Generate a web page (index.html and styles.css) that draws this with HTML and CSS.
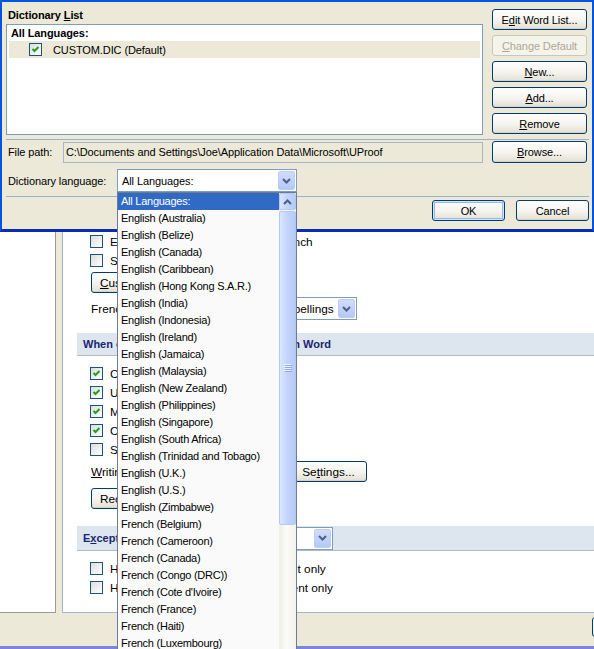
FILE: index.html
```html
<!DOCTYPE html>
<html lang="en">
<head>
    <meta charset="UTF-8">
    <title>Custom Dictionaries</title>
    <link rel="stylesheet" href="styles.css">
</head>
<body>
    <!-- Word Options window behind the dialog -->
    <div class="options">
        <div class="options-main">
            <div class="nav"></div>
            <div class="gutter"></div>
            <div class="panel">
                <div class="group">
                    <div class="check-row"><span class="cb"></span>Enforce accented uppercase in French</div>
                    <div class="check-row"><span class="cb"></span>Suggest from main dictionary only</div>
                    <button class="btn custom-btn"><u>C</u>ustom Dictionaries...</button>
                    <div class="field-row french-row">
                        <span class="field-label french-label">French modes:</span>
                        <div class="combo french-combo">
                            <span class="combo-text">Traditional and new spellings</span>
                            <span class="combo-arrow"><svg width="9" height="6" viewBox="0 0 9 6"><polyline points="1,1 4.5,4.5 8,1" fill="none" stroke="#4D6185" stroke-width="2"/></svg></span>
                        </div>
                    </div>
                </div>

                <div class="band">When correcting spelling and grammar in Word</div>

                <div class="group checks">
                    <div class="check-row"><span class="cb checked"><svg width="9" height="9" viewBox="0 0 9 9"><polyline points="1.5,4 3.5,6 7.5,2" fill="none" stroke="#21A121" stroke-width="2"/></svg></span>Check spelling as you type</div>
                    <div class="check-row"><span class="cb checked"><svg width="9" height="9" viewBox="0 0 9 9"><polyline points="1.5,4 3.5,6 7.5,2" fill="none" stroke="#21A121" stroke-width="2"/></svg></span>Use contextual spelling</div>
                    <div class="check-row"><span class="cb checked"><svg width="9" height="9" viewBox="0 0 9 9"><polyline points="1.5,4 3.5,6 7.5,2" fill="none" stroke="#21A121" stroke-width="2"/></svg></span>Mark grammar errors as you type</div>
                    <div class="check-row"><span class="cb checked"><svg width="9" height="9" viewBox="0 0 9 9"><polyline points="1.5,4 3.5,6 7.5,2" fill="none" stroke="#21A121" stroke-width="2"/></svg></span>Check grammar with spelling</div>
                    <div class="check-row"><span class="cb"></span>Show readability statistics</div>
                    <div class="field-row writing-row">
                        <span class="field-label writing-label"><u>W</u>riting Style:</span>
                        <div class="combo writing-combo">
                            <span class="combo-text">Grammar Only</span>
                            <span class="combo-arrow"><svg width="9" height="6" viewBox="0 0 9 6"><polyline points="1,1 4.5,4.5 8,1" fill="none" stroke="#4D6185" stroke-width="2"/></svg></span>
                        </div>
                        <button class="btn settings-btn">Se<u>t</u>tings...</button>
                    </div>
                    <button class="btn recheck-btn">Recheck Document</button>
                </div>

                <div class="band band-tall">
                    <span class="band-label">E<u>x</u>ceptions for:</span>
                    <div class="combo except-combo">
                        <span class="combo-text">Document1</span>
                        <span class="combo-arrow"><svg width="9" height="6" viewBox="0 0 9 6"><polyline points="1,1 4.5,4.5 8,1" fill="none" stroke="#4D6185" stroke-width="2"/></svg></span>
                    </div>
                </div>

                <div class="group checks">
                    <div class="check-row"><span class="cb"></span>Hide spelling errors in this document only</div>
                    <div class="check-row"><span class="cb"></span>Hide grammar errors in this document only</div>
                </div>
            </div>
        </div>
        <div class="options-footer">
            <button class="btn footer-btn" aria-label="OK"></button>
        </div>
        <div class="options-edge"></div>
    </div>

    <!-- Custom Dictionaries dialog -->
    <div class="dialog">
        <div class="dialog-top">
            <div class="dict-col">
                <div class="dict-label">Dictionary <u>L</u>ist</div>
                <div class="dict-list">
                    <div class="dict-group">All Languages:</div>
                    <div class="dict-row">
                        <span class="cb checked"><svg width="9" height="9" viewBox="0 0 9 9"><polyline points="1.5,4 3.5,6 7.5,2" fill="none" stroke="#21A121" stroke-width="2"/></svg></span>
                        CUSTOM.DIC (Default)
                    </div>
                </div>
            </div>
            <div class="dict-buttons">
                <button class="btn">E<u>d</u>it Word List...</button>
                <button class="btn disabled"><u>C</u>hange Default</button>
                <button class="btn"><u>N</u>ew...</button>
                <button class="btn"><u>A</u>dd...</button>
                <button class="btn"><u>R</u>emove</button>
            </div>
        </div>

        <div class="sep"></div>

        <div class="path-row">
            <span class="path-label">File path:</span>
            <div class="path-box">C:\Documents and Settings\Joe\Application Data\Microsoft\UProof</div>
            <button class="btn browse-btn"><u>B</u>rowse...</button>
        </div>

        <div class="lang-row">
            <span class="lang-label">Dictionary language:</span>
            <div class="combo lang-combo">
                <span class="combo-text">All Languages:</span>
                <span class="combo-arrow"><svg width="9" height="6" viewBox="0 0 9 6"><polyline points="1,1 4.5,4.5 8,1" fill="none" stroke="#4D6185" stroke-width="2"/></svg></span>
            </div>
        </div>

        <div class="sep sep-bottom"></div>

        <div class="dialog-actions">
            <button class="btn default-btn">OK</button>
            <button class="btn">Cancel</button>
        </div>
    </div>

    <!-- open language dropdown -->
    <div class="droplist">
        <ul class="droplist-items">
            <li class="selected">All Languages:</li>
            <li>English (Australia)</li>
            <li>English (Belize)</li>
            <li>English (Canada)</li>
            <li>English (Caribbean)</li>
            <li>English (Hong Kong S.A.R.)</li>
            <li>English (India)</li>
            <li>English (Indonesia)</li>
            <li>English (Ireland)</li>
            <li>English (Jamaica)</li>
            <li>English (Malaysia)</li>
            <li>English (New Zealand)</li>
            <li>English (Philippines)</li>
            <li>English (Singapore)</li>
            <li>English (South Africa)</li>
            <li>English (Trinidad and Tobago)</li>
            <li>English (U.K.)</li>
            <li>English (U.S.)</li>
            <li>English (Zimbabwe)</li>
            <li>French (Belgium)</li>
            <li>French (Cameroon)</li>
            <li>French (Canada)</li>
            <li>French (Congo (DRC))</li>
            <li>French (Cote d'Ivoire)</li>
            <li>French (France)</li>
            <li>French (Haiti)</li>
            <li>French (Luxembourg)</li>
        </ul>
        <div class="scrollbar">
            <div class="sb-btn"><svg width="9" height="6" viewBox="0 0 9 6"><polyline points="1,5 4.5,1.5 8,5" fill="none" stroke="#4D6185" stroke-width="2"/></svg></div>
            <div class="sb-thumb">
                <svg width="8" height="8" viewBox="0 0 8 8">
                    <rect x="0" y="0" width="7" height="1" fill="#EEF4FE"/>
                    <rect x="1" y="1" width="7" height="1" fill="#8CA8E6"/>
                    <rect x="0" y="2" width="7" height="1" fill="#EEF4FE"/>
                    <rect x="1" y="3" width="7" height="1" fill="#8CA8E6"/>
                    <rect x="0" y="4" width="7" height="1" fill="#EEF4FE"/>
                    <rect x="1" y="5" width="7" height="1" fill="#8CA8E6"/>
                    <rect x="0" y="6" width="7" height="1" fill="#EEF4FE"/>
                    <rect x="1" y="7" width="7" height="1" fill="#8CA8E6"/>
                </svg>
            </div>
        </div>
    </div>
</body>
</html>
```

FILE: styles.css
```css
* {
    margin: 0;
    padding: 0;
    box-sizing: border-box;
}

body {
    position: relative;
    width: 594px;
    height: 649px;
    overflow: hidden;
    background: #ECE9D8;
    font-family: "Liberation Sans", Arial, sans-serif;
    font-size: 11px;
    letter-spacing: -0.1px;
    color: #000;
}

u {
    text-decoration: underline;
    text-underline-offset: 1px;
}

ul {
    list-style: none;
}

/* ---------- shared XP controls ---------- */

.btn {
    display: flex;
    align-items: center;
    justify-content: center;
    height: 21px;
    padding: 0 8px;
    font: inherit;
    letter-spacing: inherit;
    color: #000;
    white-space: nowrap;
    border: 1px solid #003C74;
    border-radius: 3px;
    background: linear-gradient(#FFFFFF, #F4F3EE 55%, #E3E0D2);
    box-shadow: inset 0 -1px 0 #D8D2C6;
}

.btn.disabled {
    color: #ACA899;
    border-color: #C9C7BA;
    background: #F5F4EA;
    box-shadow: none;
}

.default-btn {
    box-shadow: inset 0 0 0 1px #CEE7FF, inset 0 0 0 2px #98B8EA;
}

.cb {
    display: flex;
    align-items: center;
    justify-content: center;
    flex-shrink: 0;
    width: 13px;
    height: 13px;
    border: 1px solid #1C5180;
    background: linear-gradient(135deg, #DCDCD7, #FFFFFF);
}

.combo {
    display: flex;
    align-items: center;
    height: 23px;
    padding: 1px;
    border: 1px solid #7F9DB9;
    background: #fff;
}

.combo-text {
    flex: 1;
    padding-left: 3px;
    white-space: nowrap;
    overflow: hidden;
}

.combo-arrow {
    display: flex;
    align-items: center;
    justify-content: center;
    flex-shrink: 0;
    width: 17px;
    height: 19px;
    border: 1px solid #BCCEF6;
    border-radius: 2px;
    background: linear-gradient(#CFDCFC, #B5C9F7);
}

/* ---------- Word Options window ---------- */

.options {
    display: flex;
    flex-direction: column;
    height: 649px;
}

.options-main {
    display: flex;
    height: 613px;
}

.nav {
    width: 56px;
    background: #fff;
    border-right: 1px solid #9C9C9C;
    border-bottom: 1px solid #9C9C9C;
}

.gutter {
    width: 6px;
}

.panel {
    flex: 1;
    overflow: hidden;
    padding: 232px 0 0 14px;
    background: #fff;
    border-left: 1px solid #A3B6CC;
    border-bottom: 1px solid #A3B6CC;
    font-size: 11.8px;
    letter-spacing: 0;
}

.group {
    padding-left: 13px;
}

.checks {
    margin-top: 8px;
}

.check-row {
    display: flex;
    align-items: center;
    height: 19px;
    white-space: nowrap;
}

.check-row .cb {
    margin-right: 7px;
}

.custom-btn {
    width: 150px;
    margin: 2px 0 0 1px;
    justify-content: flex-start;
}

.field-row {
    display: flex;
    align-items: center;
    margin-left: 1px;
    white-space: nowrap;
}

.french-row {
    margin-top: 4px;
    height: 23px;
}

.french-label {
    width: 86px;
}

.french-combo {
    width: 180px;
}

.band {
    display: flex;
    align-items: center;
    height: 23px;
    margin-top: 13px;
    padding-left: 6px;
    background: #DDE6EE;
    border-bottom: 1px solid #B5BBC3;
    font-size: 11px;
    font-weight: bold;
    color: #1B2473;
    white-space: nowrap;
}

.band-tall {
    height: 25px;
    margin-top: 17px;
}

.band-label {
    width: 107px;
}

.except-combo {
    width: 143px;
    font-weight: normal;
    color: #000;
}

.writing-row {
    margin-top: 2px;
    height: 21px;
}

.writing-label {
    width: 74px;
}

.writing-combo {
    width: 118px;
    height: 21px;
}

.writing-combo .combo-arrow {
    height: 17px;
}

.settings-btn {
    width: 77px;
    margin-left: 7px;
}

.recheck-btn {
    width: 130px;
    margin: 6px 0 0 1px;
    justify-content: flex-start;
}

.options-footer {
    display: flex;
    justify-content: flex-end;
    align-items: flex-start;
    height: 33px;
    padding-top: 4px;
}

.footer-btn {
    width: 75px;
    height: 20px;
    margin-right: -73px;
}

.options-edge {
    height: 3px;
    background: #7A86D9;
}

/* ---------- Custom Dictionaries dialog ---------- */

.dialog {
    position: absolute;
    top: 0;
    left: 0;
    width: 594px;
    height: 232px;
    background: #ECE9D8;
    border: 2px solid #0055E5;
    border-bottom: 3px solid #0A2BB4;
}

.dialog-top {
    display: flex;
    padding: 0 5px 0 4px;
}

.dict-col {
    width: 477px;
}

.dict-label {
    height: 22px;
    padding: 4px 0 0 2px;
    line-height: 18px;
    font-weight: bold;
}

.dict-list {
    height: 111px;
    padding: 0 1px;
    border: 1px solid #7F9DB9;
    background: #fff;
}

.dict-group {
    height: 16px;
    line-height: 16px;
    padding-left: 3px;
    font-weight: bold;
}

.dict-row {
    display: flex;
    align-items: center;
    height: 17px;
    margin: 0 1px;
    padding-left: 20px;
    background: #ECE9D8;
}

.dict-row .cb {
    margin-right: 11px;
}

.dict-buttons {
    display: flex;
    flex-direction: column;
    gap: 5px;
    width: 95px;
    margin-left: 9px;
    padding-top: 7px;
}

.sep {
    height: 1px;
    margin: 4px 3px 0 4px;
    background: #9DB0CA;
}

.path-row {
    display: flex;
    align-items: center;
    height: 22px;
    margin-top: 1px;
    padding-left: 6px;
}

.path-label {
    width: 55px;
}

.path-box {
    width: 420px;
    height: 21px;
    padding-left: 2px;
    line-height: 19px;
    border: 1px solid #A5B6CC;
    white-space: nowrap;
}

.browse-btn {
    width: 95px;
    height: 22px;
    margin-left: 9px;
}

.lang-row {
    display: flex;
    align-items: center;
    height: 23px;
    margin-top: 6px;
    padding-left: 6px;
}

.lang-label {
    width: 109px;
}

.lang-combo {
    width: 180px;
}

.dialog-actions {
    display: flex;
    justify-content: flex-end;
    gap: 11px;
    margin-top: 3px;
    padding-right: 3px;
}

.dialog-actions .btn {
    width: 73px;
}

/* ---------- dropdown list ---------- */

.droplist {
    position: absolute;
    top: 192px;
    left: 117px;
    display: flex;
    width: 180px;
    height: 480px;
    border: 1px solid #6E7C93;
    background: #FAFAFA;
    letter-spacing: -0.25px;
}

.droplist-items {
    flex: 1;
}

.droplist-items li {
    height: 17px;
    line-height: 17px;
    padding-left: 3px;
    white-space: nowrap;
}

.droplist-items li.selected {
    background: #316AC5;
    color: #fff;
}

.scrollbar {
    display: flex;
    flex-direction: column;
    width: 17px;
    background: linear-gradient(90deg, #EEEDE5, #FBFBF8 40%, #F3F2EC);
}

.sb-btn,
.sb-thumb {
    display: flex;
    align-items: center;
    justify-content: center;
    border: 1px solid #B4C8F5;
    border-radius: 2px;
    background: linear-gradient(90deg, #DCE7FD, #C2D3FB 50%, #B7CBF8);
}

.sb-btn {
    height: 17px;
}

.sb-thumb {
    height: 314px;
    margin-top: 1px;
}
```
